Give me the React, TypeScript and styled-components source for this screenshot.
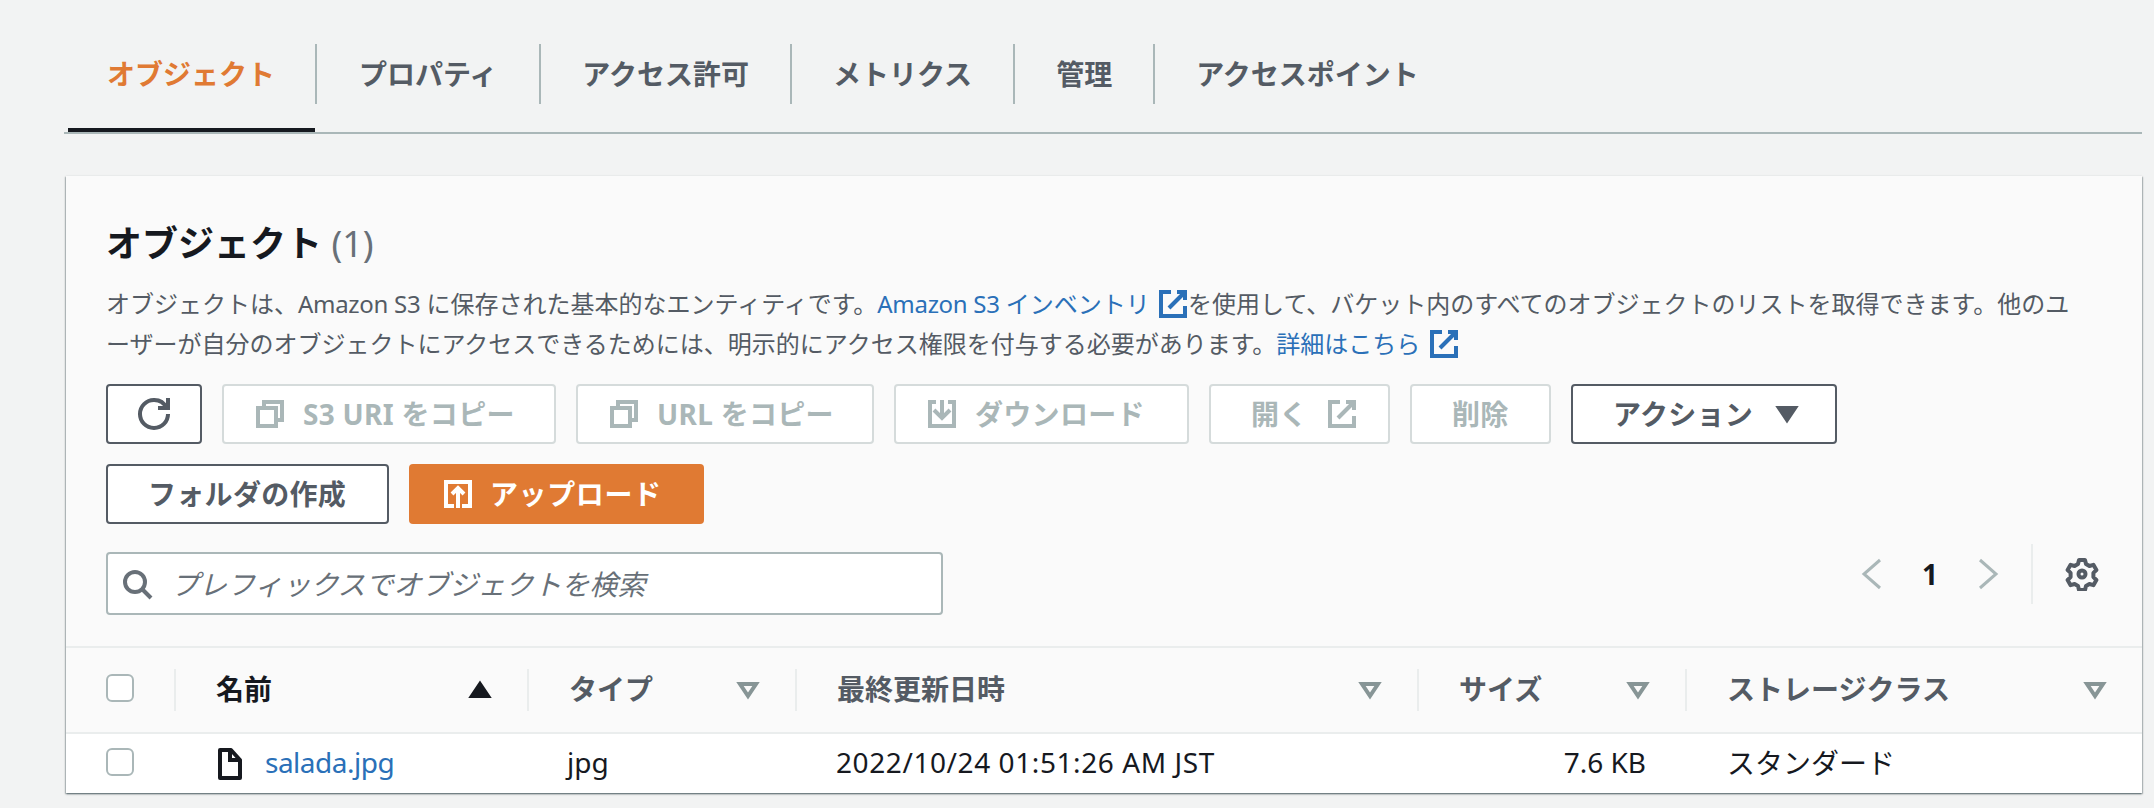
import { ReactNode } from "react";
import styled, { createGlobalStyle } from "styled-components";

const FONT = `"Noto Sans", "Noto Sans CJK JP", sans-serif`;

const TabList = ["オブジェクト", "プロパティ", "アクセス許可", "メトリクス", "管理", "アクセスポイント"];

const Columns = [
  { name: "名前", sorted: true },
  { name: "タイプ" },
  { name: "最終更新日時" },
  { name: "サイズ" },
  { name: "ストレージクラス" },
];

const Icon = ({ children, size = 32, stroke = 2 }: { children: ReactNode; size?: number; stroke?: number }) => (
  <svg width={size} height={size} viewBox="0 0 16 16" fill="none" stroke="currentColor" strokeWidth={stroke}>
    {children}
  </svg>
);

const ExternalIcon = () => (
  <Icon>
    <path d="M10 2h4v4" />
    <path d="M6 10l8-8" />
    <path d="M14 9.05V14H2V2h5" />
  </Icon>
);

const CopyIcon = () => (
  <Icon>
    <path d="M2 5h9v9H2z" />
    <path d="M5 5V2h9v9h-3" />
  </Icon>
);

const CaretFilter = () => (
  <Icon>
    <path d="M4 5h8l-4 6-4-6z" />
  </Icon>
);

const App = () => {
  return (
    <Page>
      <GlobalStyle />
      <Tabs>
        {TabList.map((tab, idx) => (
          <Tab key={tab} $active={idx === 0} $last={idx === TabList.length - 1}>
            {tab}
          </Tab>
        ))}
      </Tabs>
      <Card>
        <CardHeader>
          <Title>
            オブジェクト <Count>(1)</Count>
          </Title>
          <Description>
            オブジェクトは、<Latin>Amazon S3</Latin> に保存された基本的なエンティティです。
            <Link>
              <Latin>Amazon S3</Latin> インベントリ <ExternalIcon />
            </Link>
            を使用して、バケット内のすべてのオブジェクトのリストを取得できます。他のユ
            <br />
            ーザーが自分のオブジェクトにアクセスできるためには、明示的にアクセス権限を付与する必要があります。
            <Link>
              詳細はこちら <ExternalIcon />
            </Link>
          </Description>
          <ButtonRow>
            <Button $lead $width={96}>
              <Icon>
                <path d="M10 5h5V0" />
                <path d="M15 8a6.96 6.96 0 0 1-7 7 6.96 6.96 0 0 1-7-7 6.96 6.96 0 0 1 7-7 6.87 6.87 0 0 1 6.3 4" />
              </Icon>
            </Button>
            <Button $disabled $lead $width={334}>
              <CopyIcon />
              S3 URI をコピー
            </Button>
            <Button $disabled $lead $width={298}>
              <CopyIcon />
              URL をコピー
            </Button>
            <Button $disabled $lead $width={295}>
              <Icon>
                <path d="M11 2h3v12H2V2h3" />
                <path d="M4 6l4 4 4-4" />
                <path d="M8 1v9" />
              </Icon>
              ダウンロード
            </Button>
            <Button $disabled $width={181}>
              開く
              <ExternalIcon />
            </Button>
            <Button $disabled $width={141}>
              削除
            </Button>
            <Button $width={266}>
              アクション
              <Icon>
                <path d="M4 5h8l-4 6-4-6z" fill="currentColor" />
              </Icon>
            </Button>
          </ButtonRow>
          <ButtonRow>
            <Button $width={283}>フォルダの作成</Button>
            <PrimaryButton>
              <Icon>
                <path d="M6 14H2V2h12v12h-4" />
                <path d="M5 8l3-3 3 3" />
                <path d="M8 5v10" />
              </Icon>
              アップロード
            </PrimaryButton>
          </ButtonRow>
          <SearchRow>
            <SearchBox>
              <SearchIcon>
                <Icon>
                  <circle cx="7" cy="7" r="5" />
                  <path d="M15 15l-4.5-4.5" />
                </Icon>
              </SearchIcon>
              プレフィックスでオブジェクトを検索
            </SearchBox>
            <Pagination>
              <PageArrow>
                <Icon stroke={1.5}>
                  <path d="M12 1L4 8l8 7" />
                </Icon>
              </PageArrow>
              <PageNumber>1</PageNumber>
              <PageArrow>
                <Icon stroke={1.5}>
                  <path d="M4 1l8 7-8 7" />
                </Icon>
              </PageArrow>
              <Settings>
                <svg width={34} height={34} viewBox="0 0 34 34" fill="none" stroke="currentColor" strokeWidth={4}>
                  <path
                    d="M14 3h6l1 4 3.4 2 4-1.2 3 5.200-3 2.900v4.200l3 2.900-3 5.200-4-1.200-3.400 2-1 4h-6l-1-4-3.400-2-4 1.200-3-5.200 3-2.900v-4.200l-3-2.900 3-5.200 4 1.200 3.400-2z"
                    strokeLinejoin="round"
                  />
                  <circle cx="17" cy="17" r="3.500" />
                </svg>
              </Settings>
            </Pagination>
          </SearchRow>
        </CardHeader>
        <HeaderRow>
          <CheckCell>
            <Checkbox />
          </CheckCell>
          {Columns.map((col) => (
            <HeaderCell key={col.name} $sorted={col.sorted}>
              <HeaderLabel>{col.name}</HeaderLabel>
              {col.sorted ? (
                <Icon>
                  <path d="M8 5l4 6H4l4-6z" fill="currentColor" />
                </Icon>
              ) : (
                <FilterCaret>
                  <CaretFilter />
                </FilterCaret>
              )}
            </HeaderCell>
          ))}
        </HeaderRow>
        <BodyRow>
          <CheckCell>
            <Checkbox />
          </CheckCell>
          <NameCell>
            <Icon>
              <path d="M3 1v14h10V6L8.500 1H3z" strokeLinejoin="round" />
              <path d="M8 1v5h5" />
            </Icon>
            <FileLink>salada.jpg</FileLink>
          </NameCell>
          <Cell>jpg</Cell>
          <DateCell>2022/10/24 01:51:26 AM JST</DateCell>
          <SizeCell>7.6 KB</SizeCell>
          <StorageCell>スタンダード</StorageCell>
        </BodyRow>
      </Card>
    </Page>
  );
};

export default App;

const GRID = "108px 353px 268px 622px 268px 1fr";

const GlobalStyle = createGlobalStyle`
  html, body {
    margin: 0;
    height: 100%;
    background: #f2f3f3;
    overflow: hidden;
  }

  * {
    box-sizing: border-box;
  }
`;

const Page = styled.div`
  width: 2154px;
  height: 808px;
  padding: 0 12px 0 64px;
  font-family: ${FONT};
  font-size: 28px;
  color: #16191f;
`;

const Tabs = styled.div`
  display: flex;
  align-items: flex-start;
  height: 134px;
  padding-top: 44px;
  border-bottom: 2px solid #aab7b8;
`;

const Tab = styled.div<{ $active?: boolean; $last?: boolean }>`
  position: relative;
  display: flex;
  align-items: center;
  height: 60px;
  padding: 0 42px 2px;
  font-weight: 700;
  white-space: nowrap;
  color: ${({ $active }) => ($active ? "#e07a33" : "#545b64")};
  box-shadow: ${({ $last }) => ($last ? "none" : "1px 0 0 #aab7b8, inset -1px 0 0 #aab7b8")};

  &:first-child {
    padding: 0 41px 2px 43px;
  }

  &:nth-child(2) {
    padding: 0 43px 2px;
  }

  ${({ $active }) =>
    $active &&
    `
    &::after {
      content: "";
      position: absolute;
      left: 4px;
      right: 1px;
      bottom: -28px;
      height: 4px;
      background: #16191f;
    }
  `}
`;

const Card = styled.div`
  margin: 42px 0 0 2px;
  background: #fff;
  box-shadow: 0 1px 2px rgba(0, 28, 36, 0.5), 1px 1px 1px rgba(0, 28, 36, 0.15), -1px 1px 1px rgba(0, 28, 36, 0.15);
`;

const CardHeader = styled.div`
  padding: 42px 40px 31px;
  background: #fafafa;
`;

const Title = styled.h2`
  margin: 0;
  font-size: 36px;
  line-height: 52px;
  font-weight: 700;
`;

const Count = styled.span`
  font-weight: 400;
  color: #687078;
`;

const Description = styled.div`
  margin-top: 14px;
  font-size: 24px;
  line-height: 40px;
  color: #545b64;
  white-space: nowrap;

  svg {
    margin: 0 -1px 0 1px;
    vertical-align: -7px;
  }
`;

const Latin = styled.span`
  letter-spacing: -0.3px;
`;

const Link = styled.span`
  color: #2a70b8;
`;

const ButtonRow = styled.div`
  display: flex;
  gap: 20px;
  margin-top: 20px;
`;

const Button = styled.div<{ $disabled?: boolean; $lead?: boolean; $width: number }>`
  display: flex;
  align-items: center;
  gap: ${({ $lead }) => ($lead ? 17 : 18)}px;
  width: ${({ $width }) => $width}px;
  height: 60px;
  padding: 0 0 3px ${({ $lead }) => ($lead ? 30 : 40)}px;
  border: 2px solid ${({ $disabled }) => ($disabled ? "#d5dbdb" : "#545b64")};
  border-radius: 4px;
  background: #fff;
  font-weight: 700;
  letter-spacing: 0.3px;
  white-space: nowrap;
  color: ${({ $disabled }) => ($disabled ? "#aab7b8" : "#545b64")};

  svg {
    margin-top: 3px;
  }
`;

const PrimaryButton = styled.div`
  display: flex;
  align-items: center;
  gap: 16px;
  width: 295px;
  height: 60px;
  padding: 0 0 3px 33px;
  border-radius: 4px;
  background: #e07a33;
  font-weight: 700;
  letter-spacing: 0.6px;
  color: #fff;

  svg {
    margin-top: 3px;
  }
`;

const SearchRow = styled.div`
  display: flex;
  justify-content: space-between;
  align-items: flex-start;
  margin-top: 28px;
`;

const SearchBox = styled.div`
  display: flex;
  align-items: center;
  gap: 18px;
  width: 837px;
  height: 63px;
  padding: 0 0 2px 13px;
  border: 2px solid #aab7b8;
  border-radius: 4px;
  background: #fff;
  font-style: italic;
  color: #687078;
`;

const SearchIcon = styled.span`
  display: flex;
  margin-top: 2px;
  color: #687078;
`;

const Pagination = styled.div`
  display: flex;
  align-items: center;
  height: 60px;
  margin-top: -8px;
`;

const PageArrow = styled.span`
  display: flex;
  color: #aab7b8;
`;

const PageNumber = styled.span`
  width: 84px;
  text-align: center;
  font-weight: 700;
  color: #16191f;
`;

const Settings = styled.div`
  display: flex;
  align-items: center;
  height: 60px;
  margin-left: 27px;
  padding: 0 3px 0 32px;
  border-left: 2px solid #eaeded;
  color: #545b64;
`;

const HeaderRow = styled.div`
  display: grid;
  grid-template-columns: ${GRID};
  align-items: center;
  height: 88px;
  background: #fafafa;
  border-top: 2px solid #eaeded;
  border-bottom: 2px solid #eaeded;
`;

const CheckCell = styled.div`
  display: flex;
  align-items: center;
  padding: 0 0 4px 40px;
`;

const Checkbox = styled.span`
  display: block;
  width: 28px;
  height: 28px;
  border: 2px solid #aab7b8;
  border-radius: 6px;
  background: #fff;
`;

const HeaderCell = styled.div<{ $sorted?: boolean }>`
  display: flex;
  align-items: center;
  justify-content: space-between;
  height: 42px;
  padding: 0 31px 0 40px;
  border-left: 2px solid #eaeded;
  font-weight: 700;
  color: ${({ $sorted }) => ($sorted ? "#16191f" : "#545b64")};
`;

const HeaderLabel = styled.span`
  padding-bottom: 5px;
`;

const FilterCaret = styled.span`
  display: flex;
  color: #879596;
`;

const BodyRow = styled.div`
  display: grid;
  grid-template-columns: ${GRID};
  align-items: center;
  height: 59px;
  background: #fff;
`;

const Cell = styled.div`
  padding: 0 0 3px 40px;
  white-space: nowrap;
`;

const NameCell = styled(Cell)`
  display: flex;
  align-items: center;
  gap: 19px;
  padding: 1px 0 0 40px;
`;

const FileLink = styled(Link)`
  margin-bottom: 4px;
  letter-spacing: -0.5px;
`;

const DateCell = styled(Cell)`
  padding-left: 41px;
  letter-spacing: 0.58px;
`;

const SizeCell = styled(Cell)`
  padding-left: 0;
  padding-right: 39px;
  text-align: right;
`;

const StorageCell = styled(Cell)`
  padding-left: 42px;
`;
